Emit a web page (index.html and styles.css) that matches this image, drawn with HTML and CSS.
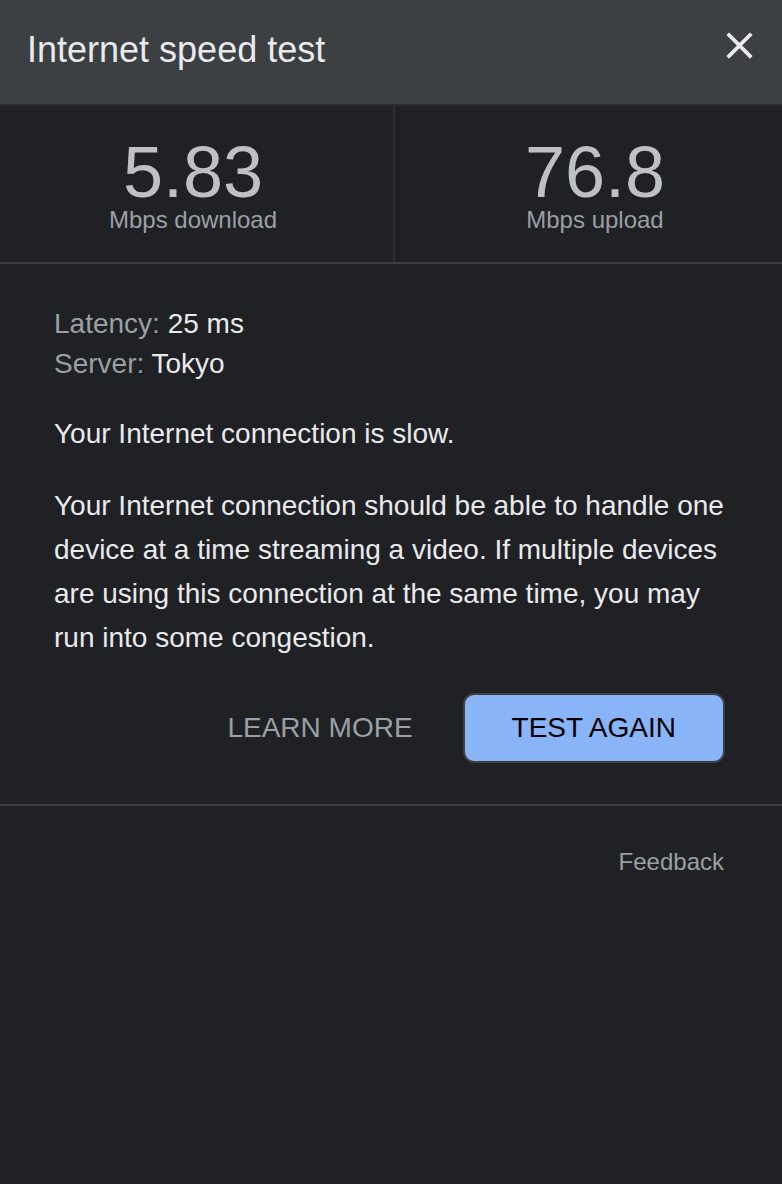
FILE: index.html
```html
<!DOCTYPE html>
<html lang="en">
<head>
<meta charset="utf-8">
<title>Internet speed test</title>
<link rel="stylesheet" href="styles.css">
</head>
<body>
<div class="panel">
  <header class="header">
    <h1 class="title">Internet speed test</h1>
    <button class="close" aria-label="Close">
      <svg viewBox="0 0 24 24" width="45" height="45"><path fill="#e8eaed" d="M19 6.41L17.59 5 12 10.59 6.41 5 5 6.41 10.59 12 5 17.59 6.41 19 12 13.41 17.59 19 19 17.59 13.41 12z"/></svg>
    </button>
  </header>
  <section class="stats">
    <div class="stat stat-left">
      <div class="value">5.83</div>
      <div class="unit">Mbps download</div>
    </div>
    <div class="stat stat-right">
      <div class="value">76.8</div>
      <div class="unit">Mbps upload</div>
    </div>
  </section>
  <section class="body">
    <div class="meta">
      <div><span class="label">Latency:</span> <span class="val">25 ms</span></div>
      <div><span class="label">Server:</span> <span class="val">Tokyo</span></div>
    </div>
    <p class="text">Your Internet connection is slow.</p>
    <p class="text">Your Internet connection should be able to handle one device at a time streaming a video. If multiple devices are using this connection at the same time, you may run into some congestion.</p>
    <div class="actions">
      <a class="learn">LEARN MORE</a>
      <button class="again">TEST AGAIN</button>
    </div>
  </section>
  <footer class="footer">
    <a class="feedback">Feedback</a>
  </footer>
</div>
</body>
</html>
```

FILE: styles.css
```css
html, body {
  margin: 0;
  padding: 0;
  background: #202124;
}
body {
  font-family: "Liberation Sans", Arial, sans-serif;
  color: #e8eaed;
}
.panel {
  width: 782px;
  min-height: 1184px;
  background: #202124;
}
.header {
  box-sizing: border-box;
  height: 106px;
  background: #3c4043;
  border-bottom: 2px solid #2a2b2e;
  display: flex;
  justify-content: space-between;
  align-items: flex-start;
  padding: 28px 20px 0 27px;
}
.title {
  margin: 0;
  font-size: 36px;
  line-height: 44px;
  font-weight: normal;
  color: #e8eaed;
}
.close {
  background: none;
  border: 0;
  padding: 0;
  margin-top: -5px;
  width: 45px;
  height: 45px;
  display: block;
}
.close svg { display: block; }
.stats {
  display: flex;
  height: 158px;
  box-sizing: border-box;
  border-bottom: 2px solid #3c4043;
}
.stat {
  box-sizing: border-box;
  display: flex;
  flex-direction: column;
  align-items: center;
  padding-top: 30px;
}
.stat-left {
  width: 393px;
  padding-right: 7px;
}
.stat-right {
  flex: 1;
  border-left: 2px solid #303134;
  padding-left: 13px;
}
.value {
  font-size: 72px;
  line-height: 72px;
  color: #bdc1c6;
}
.unit {
  font-size: 24px;
  line-height: 24px;
  color: #9aa0a6;
}
.body {
  padding: 40px 54px 41px 54px;
  border-bottom: 2px solid #3c4043;
}
.meta {
  font-size: 28px;
  line-height: 40px;
}
.label { color: #9aa0a6; }
.val { color: #e8eaed; }
.text {
  margin: 28px 0 0 0;
  font-size: 28px;
  line-height: 44px;
  color: #e8eaed;
}
.actions {
  display: flex;
  justify-content: flex-end;
  align-items: center;
  gap: 50px;
  margin-top: 33px;
  padding-right: 3px;
}
.learn {
  font-size: 28px;
  line-height: 32px;
  color: #9aa0a6;
}
.again {
  font-family: "Liberation Sans", Arial, sans-serif;
  font-size: 28px;
  line-height: 32px;
  color: #000;
  background: #8ab4f8;
  border: 2px solid #3c4043;
  border-radius: 11px;
  padding: 17px 47px;
}
.footer {
  display: flex;
  justify-content: flex-end;
  padding: 44px 58px 0 0;
}
.feedback {
  font-size: 24px;
  line-height: 24px;
  color: #9aa0a6;
}
```
